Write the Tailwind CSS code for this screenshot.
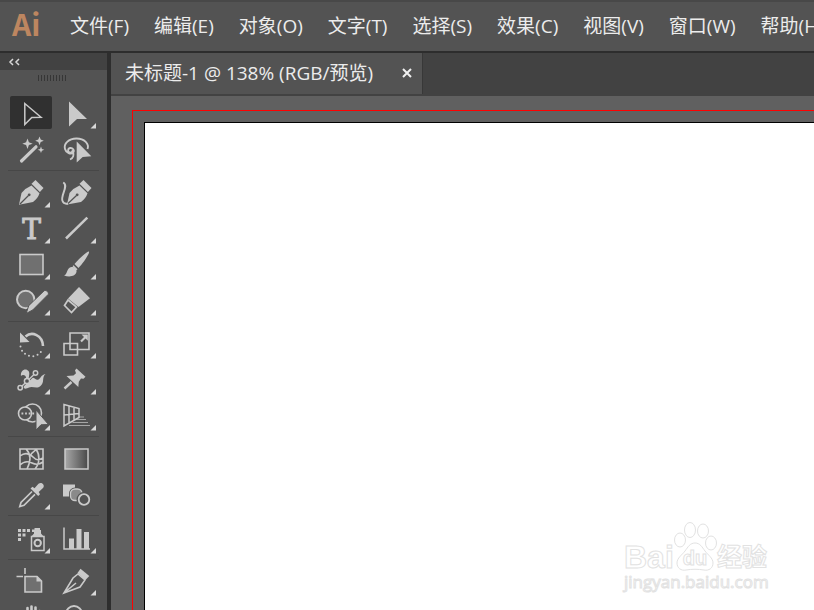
<!DOCTYPE html>
<html lang="zh-CN">
<head>
    <meta charset="UTF-8">
    <meta name="viewport" content="width=device-width, initial-scale=1.0">
    <title>未标题-1</title>
    <script src="https://cdn.jsdelivr.net/npm/@tailwindcss/browser@4"></script>
</head>
<body class="flex h-screen flex-col overflow-hidden bg-[#535353] font-['Open_Sans','Noto_Sans_CJK_SC',sans-serif] text-[19px] font-normal text-[#ececec]">
    <!-- Shared icon parts -->
    <svg class="hidden">
        <defs>
            <path id="more" d="M42 27v5.500h-5.500z" fill="#d8d8d8" />
        </defs>
    </svg>

    <!-- Menu bar -->
    <header class="flex h-[53px] shrink-0 items-center border-t-2 border-b-2 border-t-[#484848] border-b-[#2d2d2d] pl-3">
        <div class="w-[58px] shrink-0 pb-2 font-['Noto_Sans_CJK_SC',sans-serif] text-[30px] leading-8 font-bold text-[#bd8660]">Ai</div>
        <nav class="flex gap-[25px] whitespace-nowrap">
            <button type="button">文件(F)</button>
            <button type="button">编辑(E)</button>
            <button type="button">对象(O)</button>
            <button type="button">文字(T)</button>
            <button type="button">选择(S)</button>
            <button type="button">效果(C)</button>
            <button type="button">视图(V)</button>
            <button type="button">窗口(W)</button>
            <button type="button">帮助(H)</button>
        </nav>
    </header>

    <div class="flex min-h-0 flex-1">
        <!-- Tool panel -->
        <aside class="w-[111px] shrink-0 overflow-hidden border-r-4 border-[#2e2e2e] text-[#cacaca]">
            <button type="button" aria-label="折叠" class="flex h-[17px] w-full items-center bg-[#424242] pl-2">
                <svg class="h-3 w-3" viewBox="0 0 12 12" fill="none" stroke="#d8d8d8" stroke-width="1.500"><path d="M5 3 2 6l3 3M11 3 8 6l3 3" /></svg>
            </button>
            <div class="flex h-[26px] pt-[5px] pl-[38px]">
                <svg class="h-[6px] w-[30px]" viewBox="0 0 30 6" stroke="#363636"><path d="M.5 0v6M3.500 0v6M6.500 0v6M9.500 0v6M12.500 0v6M15.500 0v6M18.500 0v6M21.500 0v6M24.500 0v6M27.500 0v6" /></svg>
            </div>

            <div class="mx-2 grid grid-cols-[46px_46px] border-b border-[#474747] pb-[2px]">
                <button type="button" aria-label="选择工具">
                    <svg class="h-9 w-[46px]" viewBox="0 0 46 36" fill="none" stroke="currentColor" stroke-width="1.500">
                        <rect x="2" y="0" width="42" height="33" rx="2" fill="#303030" stroke="none" />
                        <path d="M16.800 7.500v21l7-7 9.200-.2z" />
                    </svg>
                </button>
                <button type="button" aria-label="直接选择工具">
                    <svg class="h-9 w-[46px]" viewBox="0 0 46 36" fill="currentColor"><path d="M15 5.500v25l8-7.500h10z" /><use href="#more" /></svg>
                </button>
                <button type="button" aria-label="魔棒工具">
                    <svg class="h-9 w-[46px]" viewBox="0 0 46 36" fill="currentColor">
                        <path d="M13.500 29 28 14.800" stroke="currentColor" stroke-width="3.200" stroke-linecap="round" />
                        <path d="m19.500 6.500 1.400 3.800 3.800 1.400-3.800 1.400-1.400 3.900-1.400-3.900-3.800-1.400 3.800-1.400zM31.500 4.500l1.200 3.100 3.100 1.200-3.100 1.200-1.200 3.200-1.200-3.200-3.100-1.200 3.100-1.200zM33 14.500l.9 2.400 2.400.9-2.400.9-.9 2.400-.9-2.400-2.400-.9 2.400-.9z" />
                    </svg>
                </button>
                <button type="button" aria-label="套索工具">
                    <svg class="h-9 w-[46px]" viewBox="0 0 46 36" fill="currentColor">
                        <path d="M33.500 17c2-5-3-10.500-11-10.500S9.500 12 11 17c1 4 6 5.500 8 3.500s-.5-5-3-4.500-2.500 4-.5 4.500 3.500-1 3-2.500m.5 2c1 2.500.5 6-3 7.500" fill="none" stroke="currentColor" stroke-width="1.900" />
                        <path d="M22.700 9.500v21l6-5.500 8.600-.8z" />
                    </svg>
                </button>
            </div>

            <div class="mx-2 grid grid-cols-[46px_46px] border-b border-[#474747] pt-1 pb-[2px]">
                <button type="button" aria-label="钢笔工具">
                    <svg class="h-9 w-[46px]" viewBox="0 0 46 36" fill="currentColor">
                        <path d="M11 29.800 13.500 18q4-5 10-7.500l8 7.800q-1.500 5-6.500 8.700z" /><path d="m23.500 8.800 4-3.800 8 8-3.600 4z" />
                        <path d="m12 29 8.500-8.500" stroke="#535353" stroke-width="1.300" /><circle cx="21.200" cy="19.800" r="1.400" fill="#535353" /><use href="#more" />
                    </svg>
                </button>
                <button type="button" aria-label="曲率工具">
                    <svg class="h-9 w-[46px]" viewBox="0 0 46 36" fill="currentColor">
                        <path d="M13 29.500 15.500 18q4-5 10-7.500l8 7.800q-1.500 5-6.500 8.700z" /><path d="m25.500 8.800 4-3.800 8 8-3.600 4z" />
                        <path d="m14 28.500 8.500-8" stroke="#535353" stroke-width="1.300" /><circle cx="23.200" cy="19.800" r="1.400" fill="#535353" />
                        <path d="M9.200 7.500c6 3-3 13-.7 18.500 1 2.500 3.500 3 5.500 2.500" fill="none" stroke="currentColor" stroke-width="1.900" />
                    </svg>
                </button>
                <button type="button" aria-label="文字工具">
                    <svg class="h-9 w-[46px]" viewBox="0 0 46 36" fill="currentColor">
                        <text x="23.500" y="27.500" text-anchor="middle" stroke="currentColor" stroke-width="1" class="font-['DejaVu_Serif',serif] text-[28px] font-normal">T</text><use href="#more" />
                    </svg>
                </button>
                <button type="button" aria-label="直线段工具">
                    <svg class="h-9 w-[46px]" viewBox="0 0 46 36"><path d="M12 27.500 33.300 6.700" stroke="currentColor" stroke-width="2.500" /><use href="#more" /></svg>
                </button>
                <button type="button" aria-label="矩形工具">
                    <svg class="h-9 w-[46px]" viewBox="0 0 46 36"><rect x="12" y="7.500" width="23" height="20" fill="#707070" stroke="currentColor" stroke-width="1.600" /><use href="#more" /></svg>
                </button>
                <button type="button" aria-label="画笔工具">
                    <svg class="h-9 w-[46px]" viewBox="0 0 46 36" fill="currentColor">
                        <path d="M35 4.500c1 1.500-6 12-10.500 16.500L20.500 17C25 11.500 33.500 4 35 4.500zM19.500 18.200l4 4-1 1-4-4z" />
                        <path d="M17.500 20c3-.5 5.500 2 5 4.800-.7 4.200-6.500 5.700-12.500 3.700 3.500-1 2.500-7.500 7.500-8.500z" /><use href="#more" />
                    </svg>
                </button>
                <button type="button" aria-label="Shaper 工具">
                    <svg class="h-9 w-[46px]" viewBox="0 0 46 36" fill="currentColor">
                        <circle cx="17.700" cy="16.500" r="8.700" fill="#707070" stroke="currentColor" stroke-width="2" />
                        <path d="m18.200 30.500 2.500-7.800 15.500-15c2-1 5 1.700 4 3.700l-15.500 15.600z" stroke="#535353" /><use href="#more" />
                    </svg>
                </button>
                <button type="button" aria-label="橡皮擦工具">
                    <svg class="h-9 w-[46px]" viewBox="0 0 46 36" fill="currentColor">
                        <path d="m25 4 11 11.300-11.500 8.700L14 15.500z" />
                        <path d="m14 17 8.500 7-5 5.500-7-7z" fill="none" stroke="currentColor" stroke-width="1.700" /><use href="#more" />
                    </svg>
                </button>
            </div>

            <div class="mx-2 grid grid-cols-[46px_46px] border-b border-[#474747] pt-1 pb-[2px]">
                <button type="button" aria-label="旋转工具">
                    <svg class="h-9 w-[46px]" viewBox="0 0 46 36" fill="currentColor">
                        <path d="M17.500 10.500C24 5 34.500 9 35 20" fill="none" stroke="currentColor" stroke-width="2.600" /><path d="m12 6.500 9.500 9.500-9.500.5z" />
                        <path d="M12.500 20.500c2 11.500 18.500 13.500 22 2" fill="none" stroke="currentColor" stroke-width="2" stroke-linecap="round" stroke-dasharray="0 4.400" /><use href="#more" />
                    </svg>
                </button>
                <button type="button" aria-label="比例缩放工具">
                    <svg class="h-9 w-[46px]" viewBox="0 0 46 36" fill="none" stroke="currentColor" stroke-width="1.600">
                        <path d="M16 7h19v16.500H16zM10 17.500h13.500V29H10z" /><path d="m27 15.500 4.500-4.500" stroke-width="2.200" /><path d="M27.500 8.500h6.300v6.300z" fill="currentColor" stroke="none" /><use href="#more" stroke="none" />
                    </svg>
                </button>
                <button type="button" aria-label="宽度工具">
                    <svg class="h-9 w-[46px]" viewBox="0 0 46 36" fill="currentColor">
                        <path d="M13 14c-1-6 5-8.500 7.500-5 2 3-.5 5.500 1 7 4-3 6 3 9 1.500 3-2 2-4 7-5.500-4 3-.5 8.500-5 12-4 3.500-8-.5-11.500 1.500-3 1.500-5 2-5.500-1 0-3 2.500-5 2.500-9-.5-3-4-3-5-1.500z" />
                        <path d="M13.500 24.500 26 12.500" stroke="#535353" stroke-width="3" /><path d="M13.500 24.500 26 12.500" stroke="currentColor" stroke-width="1.300" />
                        <g fill="#535353" stroke="currentColor" stroke-width="1.500"><circle cx="12.200" cy="25.800" r="2.200" /><circle cx="27.500" cy="11" r="2.200" /><circle cx="19" cy="19" r="2.600" /></g><use href="#more" />
                    </svg>
                </button>
                <button type="button" aria-label="操控变形工具">
                    <svg class="h-9 w-[46px]" viewBox="0 0 46 36" fill="currentColor">
                        <path d="m10.500 26.500 7-6.500" stroke="currentColor" stroke-width="2.400" /><path d="m22.500 6.500 9 8.200-2 2-2.500-.2-2.200 3.200-.5 5.300L12.500 14l7-.5 2.500-2.300-1-3z" /><use href="#more" />
                    </svg>
                </button>
                <button type="button" aria-label="形状生成器工具">
                    <svg class="h-9 w-[46px]" viewBox="0 0 46 36" fill="none" stroke="currentColor" stroke-width="1.600">
                        <circle cx="24.500" cy="15" r="9" /><circle cx="17" cy="15.500" r="6.500" fill="#535353" />
                        <path d="M13.500 15.500h13" stroke-width="1.800" stroke-dasharray="1.800 1.800" /><path d="M28 12v20l5-5.200 7.500-.3z" fill="currentColor" stroke="#535353" stroke-width="1" /><use href="#more" stroke="none" />
                    </svg>
                </button>
                <button type="button" aria-label="透视网格工具">
                    <svg class="h-9 w-[46px]" viewBox="0 0 46 36" fill="none" stroke="currentColor" stroke-width="1.500">
                        <path d="M10 6.500V28l15-8.500v-9zM15 8.500v16.500M20 9.500v13M10 17l15-1.500" /><path d="M25 19h5M22 21.500h10M18.500 24.500H34M15 27.500h21" stroke-width="1" opacity=".7" /><use href="#more" stroke="none" />
                    </svg>
                </button>
            </div>

            <div class="mx-2 grid grid-cols-[46px_46px] border-b border-[#474747] pt-1 pb-[2px]">
                <button type="button" aria-label="网格工具">
                    <svg class="h-9 w-[46px]" viewBox="0 0 46 36" fill="none" stroke="currentColor" stroke-width="1.600">
                        <path d="M12 8h23v20H12zM18 8c5 5 5 12 1 20M28 8c4 6 4 14-1 20M12 15c5-4 9-3 13 1s6 3 10 1M12 24c4-4 8-4 12-2s7 2 11-1M22 15c2-4 5-5 7-7" />
                    </svg>
                </button>
                <button type="button" aria-label="渐变工具">
                    <svg class="h-9 w-[46px]" viewBox="0 0 46 36">
                        <linearGradient id="fade"><stop offset="0" stop-color="#a8a8a8" /><stop offset="1" stop-color="#484848" /></linearGradient>
                        <rect x="11" y="8" width="23" height="20" fill="url(#fade)" stroke="currentColor" stroke-width="1.500" />
                    </svg>
                </button>
                <button type="button" aria-label="吸管工具">
                    <svg class="h-9 w-[46px]" viewBox="0 0 46 36" fill="currentColor">
                        <path d="m24 14.500-11 11-1.200 4 4.200-1.200 11-11" fill="none" stroke="currentColor" stroke-width="1.700" />
                        <path d="m22.500 11.500 2-1.800 2 1.500 4-4.500c3-2.500 7 1.300 4.500 4.300L30.700 15l1.300 2.300-1.800 1.700z" /><use href="#more" />
                    </svg>
                </button>
                <button type="button" aria-label="混合工具">
                    <svg class="h-9 w-[46px]" viewBox="0 0 46 36" fill="currentColor">
                        <path d="M9 7.500h12v12H9z" /><rect x="16.500" y="12" width="11.500" height="11.500" rx="4.500" fill="#8a8a8a" stroke="#535353" stroke-width="3" /><rect x="16.500" y="12" width="11.500" height="11.500" rx="4.500" fill="#8a8a8a" stroke="currentColor" stroke-width="1.300" />
                        <circle cx="30" cy="22.500" r="5.500" fill="#535353" stroke="#535353" stroke-width="4" /><circle cx="30" cy="22.500" r="5.300" fill="#535353" stroke="currentColor" stroke-width="1.800" />
                    </svg>
                </button>
            </div>

            <div class="mx-2 grid grid-cols-[46px_46px] border-b border-[#474747] pt-[5px] pb-[2px]">
                <button type="button" aria-label="符号喷枪工具">
                    <svg class="h-9 w-[46px]" viewBox="0 0 46 36" fill="currentColor">
                        <path d="M10 8h3v3h-3zM14.500 8h3v3h-3zM19 8h3v3h-3zM10 12.500h3v3h-3zM14.500 12.500h3v3h-3zM10 17h3v3h-3zM26.500 7H32v2h1v3.500l3 3.500H23l3-3.500V11h-2V8.500h2.500z" />
                        <g fill="none" stroke="currentColor"><path d="M23.500 15.500h12.500v14H23.500z" stroke-width="1.500" /><circle cx="29.700" cy="22" r="3.200" stroke-width="2" /></g><use href="#more" />
                    </svg>
                </button>
                <button type="button" aria-label="柱形图工具">
                    <svg class="h-9 w-[46px]" viewBox="0 0 46 36" fill="currentColor">
                        <path d="M10 6.500V28h26" fill="none" stroke="currentColor" stroke-width="1.500" /><path d="M15 17.500h5V28h-5zM22.500 8h5v20h-5zM30 11h5v17h-5z" /><use href="#more" />
                    </svg>
                </button>
            </div>

            <div class="mx-2 grid grid-cols-[46px_46px] pt-[3px]">
                <button type="button" aria-label="画板工具">
                    <svg class="h-9 w-[46px]" viewBox="0 0 46 36" fill="none" stroke="currentColor" stroke-width="1.600">
                        <path d="M17 5v6M8.500 13.500H15" /><path d="M17 13.500h12l4.500 4.500v11H17z" fill="#707070" /><path d="M28.500 13v5.500H34z" fill="currentColor" stroke="none" />
                    </svg>
                </button>
                <button type="button" aria-label="切片工具">
                    <svg class="h-9 w-[46px]" viewBox="0 0 46 36" fill="currentColor">
                        <path d="m10 30 9-15 5-4 7 6-5 7zm0 0 12-10" fill="none" stroke="currentColor" stroke-width="1.600" /><path d="m23.500 10 3-4.200 8.800 7.200L31.500 17z" /><use href="#more" />
                    </svg>
                </button>
                <button type="button" aria-label="抓手工具">
                    <svg class="h-9 w-[46px]" viewBox="0 0 46 36" fill="none" stroke="currentColor" stroke-width="2.600" stroke-linecap="round">
                        <path d="M19.500 19V9M23.500 18V7.500M27.500 18V8.500M31.500 20v-8M19 22l-4-6" /><path d="M19 18h13l-2 11h-8z" fill="currentColor" />
                    </svg>
                </button>
                <button type="button" aria-label="缩放工具">
                    <svg class="h-9 w-[46px]" viewBox="0 0 46 36" fill="none" stroke="currentColor" stroke-width="2"><circle cx="20" cy="15" r="8" /><path d="m26 21 9 9" stroke-width="3" /></svg>
                </button>
            </div>
        </aside>

        <!-- Document area -->
        <main class="flex min-w-0 flex-1 flex-col">
            <div class="flex h-[43px] shrink-0 border-b-2 border-[#424242] bg-[#424242]">
                <div class="flex items-center gap-7 border-r border-[#383838] bg-[#535353] pr-[9px] pl-[14px]">
                    <span class="whitespace-nowrap">未标题-1 @ 138% (RGB/预览)</span>
                    <button type="button" aria-label="关闭">
                        <svg class="h-3 w-3" viewBox="0 0 12 12" stroke="#f0f0f0" stroke-width="2"><path d="m2 1 8 8M10 1l-8 8" /></svg>
                    </button>
                </div>
            </div>
            <div class="relative flex min-h-0 flex-1 bg-[#606060] pt-[14px] pl-[21px]">
                <div class="flex flex-1 border-t border-l border-[#ff0000] pt-[11px] pl-[11px]">
                    <div class="flex-1 border-t border-l border-black bg-white"></div>
                </div>
                <!-- Watermark -->
                <svg class="absolute right-[34px] bottom-3 h-20 w-40" viewBox="0 0 160 80" fill="#fff" stroke="#e2e2e2" stroke-width="1">
                    <text x="4" y="50" class="font-['Liberation_Sans',sans-serif] text-[32px] font-bold">Bai</text>
                    <path d="M75 25c5 0 7 4 10 8s8 7 8 12-4 8-9 7c-6-1-12-1-18 0-5 1-9-2-9-7s5-8 8-12 5-8 10-8z" />
                    <ellipse cx="60" cy="22" rx="5.500" ry="7" /><ellipse cx="70" cy="12" rx="5.500" ry="7.500" /><ellipse cx="83" cy="13" rx="5.500" ry="7" /><ellipse cx="91" cy="25" rx="5.500" ry="7" />
                    <text x="75" y="47" text-anchor="middle" class="font-['Liberation_Sans',sans-serif] text-[20px] font-bold">du</text>
                    <text x="97" y="48" class="font-['Noto_Sans_CJK_SC',sans-serif] text-[25px] font-bold">经验</text>
                    <text x="4" y="70" class="font-['Open_Sans',sans-serif] text-[17px] font-normal">jingyan.baidu.com</text>
                </svg>
            </div>
        </main>
    </div>
</body>
</html>
